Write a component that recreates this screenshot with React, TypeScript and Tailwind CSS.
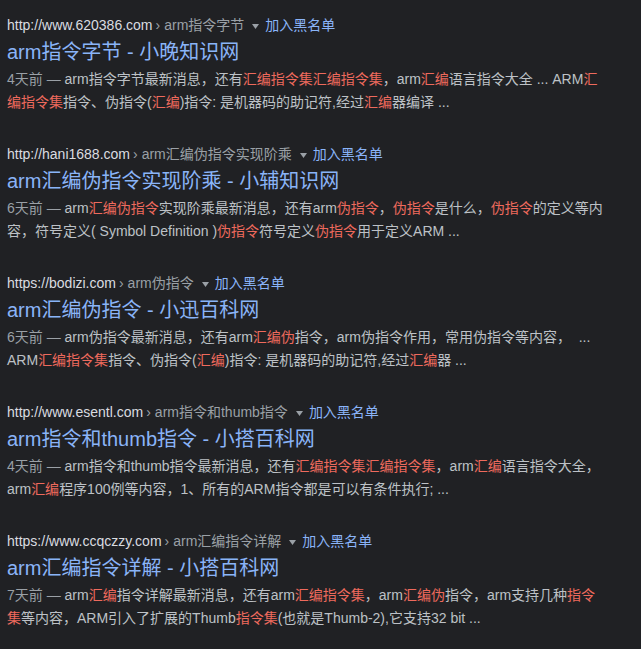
const results = [
  {
    url: 'http://www.620386.com',
    crumb: 'arm指令字节',
    title: 'arm指令字节 - 小晚知识网',
    date: '4天前',
    snippet:
      'arm指令字节最新消息，还有[汇编指令集汇编指令集]，arm[汇编]语言指令大全 ... ARM[汇编指令集]指令、伪指令([汇编])指令: 是机器码的助记符,经过[汇编]器编译 ...',
  },
  {
    url: 'http://hani1688.com',
    crumb: 'arm汇编伪指令实现阶乘',
    title: 'arm汇编伪指令实现阶乘 - 小辅知识网',
    date: '6天前',
    snippet:
      'arm[汇编伪指令]实现阶乘最新消息，还有arm[伪指令]，[伪指令]是什么，[伪指令]的定义等内容，符号定义( Symbol Definition )[伪指令]符号定义[伪指令]用于定义ARM ...',
  },
  {
    url: 'https://bodizi.com',
    crumb: 'arm伪指令',
    title: 'arm汇编伪指令 - 小迅百科网',
    date: '6天前',
    snippet:
      'arm伪指令最新消息，还有arm[汇编伪]指令，arm伪指令作用，常用伪指令等内容，\u00a0 ... ARM[汇编指令集]指令、伪指令([汇编])指令: 是机器码的助记符,经过[汇编]器 ...',
  },
  {
    url: 'http://www.esentl.com',
    crumb: 'arm指令和thumb指令',
    title: 'arm指令和thumb指令 - 小搭百科网',
    date: '4天前',
    snippet:
      'arm指令和thumb指令最新消息，还有[汇编指令集汇编指令集]，arm[汇编]语言指令大全，arm[汇编]程序100例等内容，1、所有的ARM指令都是可以有条件执行; ...',
  },
  {
    url: 'https://www.ccqczzy.com',
    crumb: 'arm汇编指令详解',
    title: 'arm汇编指令详解 - 小搭百科网',
    date: '7天前',
    snippet:
      'arm[汇编]指令详解最新消息，还有arm[汇编指令集]，arm[汇编伪]指令，arm支持几种[指令集]等内容，ARM引入了扩展的Thumb[指令集](也就是Thumb-2),它支持32 bit ...',
  },
]

// split "[...]" parts out as highlighted runs
function Snippet({ text }: { text: string }) {
  const parts = text.split(/(\[[^\]]*\])/)
  return (
    <>
      {parts.map((p, i) =>
        p.startsWith('[') ? (
          <span key={i} className="text-[#ee6a5d]">
            {p.slice(1, -1)}
          </span>
        ) : (
          <span key={i}>{p}</span>
        ),
      )}
    </>
  )
}

export default function App() {
  return (
    <div
      className="min-h-[649px] bg-[#202124] pt-[15px] pl-[7px]"
      style={{ fontFamily: '"Liberation Sans", "Noto Sans CJK SC", sans-serif' }}
    >
      <div className="w-[600px]">
        {results.map((r) => (
          <div key={r.url} className="mb-[30px]">
            {/* url row */}
            <div className="flex items-center h-5 text-[14px] leading-5 whitespace-nowrap">
              <span className="text-[#dadce0]">{r.url}</span>
              <span className="text-[#9aa0a6] pl-[3px] pr-[4px]">›</span>
              <span className="text-[#9aa0a6]">{r.crumb}</span>
              <svg width="7" height="5" viewBox="0 0 7 5" className="ml-[8px] mr-[6px] mt-[2px]">
                <polygon points="0,0 7,0 3.5,5" fill="#9aa0a6" />
              </svg>
              <span className="text-[#8ab4f8]">加入黑名单</span>
            </div>
            {/* title */}
            <div className="mt-1 text-[20px] leading-[26px] text-[#8ab4f8]">{r.title}</div>
            {/* snippet */}
            <div className="mt-[3px] text-[14px] leading-[23px] text-[#bdc1c6]">
              <span className="text-[#9aa0a6]">{r.date} — </span>
              <Snippet text={r.snippet} />
            </div>
          </div>
        ))}
      </div>
    </div>
  )
}
